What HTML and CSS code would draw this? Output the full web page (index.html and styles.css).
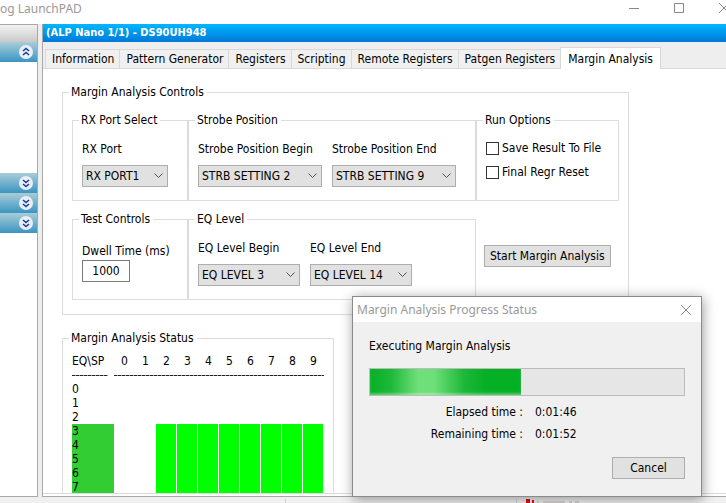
FILE: index.html
```html
<!DOCTYPE html>
<html lang="en">
<head>
    <meta charset="UTF-8" />
    <meta name="viewport" content="width=device-width, initial-scale=1" />
    <title>Analog LaunchPAD</title>
    <link rel="stylesheet" href="styles.css">
</head>
<body>
    <svg class="symbols" aria-hidden="true">
        <symbol id="chevrons" viewBox="0 0 14 14">
            <circle cx="7" cy="7" r="7" fill="#e9eefb" />
            <path d="M4 4l3 2.500L10 4M4 8l3 2.500L10 8" fill="none" stroke="#1c3d94" stroke-width="1.6" />
        </symbol>
    </svg>

    <div class="window">
        <header class="title-bar">
            <span class="title-text">og LaunchPAD</span>
            <div class="window-buttons">
                <button class="window-btn" aria-label="Minimize">
                    <svg width="12" height="12" viewBox="0 0 12 12"><path d="M1 6.500h10" /></svg>
                </button>
                <button class="window-btn" aria-label="Maximize">
                    <svg width="12" height="12" viewBox="0 0 12 12"><path d="M1.500 1.500h9v9h-9z" /></svg>
                </button>
                <button class="window-btn" aria-label="Close">
                    <svg width="12" height="12" viewBox="0 0 12 12"><path d="M1 1l10 10M11 1L1 11" /></svg>
                </button>
            </div>
        </header>

        <div class="workspace">
            <aside class="sidebar">
                <div class="sidebar-head"></div>
                <button class="sidebar-band open" aria-label="Collapse section"><svg class="chevrons up"><use href="#chevrons" /></svg></button>
                <div class="sidebar-body"></div>
                <button class="sidebar-band" aria-label="Expand section"><svg class="chevrons"><use href="#chevrons" /></svg></button>
                <button class="sidebar-band" aria-label="Expand section"><svg class="chevrons"><use href="#chevrons" /></svg></button>
                <button class="sidebar-band" aria-label="Expand section"><svg class="chevrons"><use href="#chevrons" /></svg></button>
            </aside>

            <main class="panel">
                <h1 class="panel-title">(ALP Nano 1/1) - DS90UH948</h1>
                <nav class="tabs" role="tablist">
                    <button class="tab" role="tab">Information</button>
                    <button class="tab" role="tab">Pattern Generator</button>
                    <button class="tab" role="tab">Registers</button>
                    <button class="tab" role="tab">Scripting</button>
                    <button class="tab" role="tab">Remote Registers</button>
                    <button class="tab" role="tab">Patgen Registers</button>
                    <button class="tab active" role="tab" aria-selected="true">Margin Analysis</button>
                </nav>

                <div class="page">
                    <fieldset class="group controls">
                        <legend>Margin Analysis Controls</legend>
                        <div class="control-grid">
                            <fieldset class="group">
                                <legend>RX Port Select</legend>
                                <div class="fields">
                                    <div class="field">
                                        <label for="rxPort">RX Port</label>
                                        <select id="rxPort" class="port"><option>RX PORT1</option></select>
                                    </div>
                                </div>
                            </fieldset>
                            <fieldset class="group">
                                <legend>Strobe Position</legend>
                                <div class="fields">
                                    <div class="field">
                                        <label for="spBegin">Strobe Position Begin</label>
                                        <select id="spBegin" class="strobe"><option>STRB SETTING 2</option></select>
                                    </div>
                                    <div class="field">
                                        <label for="spEnd">Strobe Position End</label>
                                        <select id="spEnd" class="strobe"><option>STRB SETTING 9</option></select>
                                    </div>
                                </div>
                            </fieldset>
                            <fieldset class="group">
                                <legend>Run Options</legend>
                                <div class="checks">
                                    <label class="check"><input type="checkbox">Save Result To File</label>
                                    <label class="check"><input type="checkbox">Final Regr Reset</label>
                                </div>
                            </fieldset>
                            <fieldset class="group">
                                <legend>Test Controls</legend>
                                <div class="dwell">
                                    <label for="dwell">Dwell Time (ms)</label>
                                    <input id="dwell" type="text" value="1000">
                                </div>
                            </fieldset>
                            <fieldset class="group">
                                <legend>EQ Level</legend>
                                <div class="fields">
                                    <div class="field">
                                        <label for="eqBegin">EQ Level Begin</label>
                                        <select id="eqBegin" class="level"><option>EQ LEVEL 3</option></select>
                                    </div>
                                    <div class="field">
                                        <label for="eqEnd">EQ Level End</label>
                                        <select id="eqEnd" class="level"><option>EQ LEVEL 14</option></select>
                                    </div>
                                </div>
                            </fieldset>
                            <div class="start">
                                <button class="btn">Start Margin Analysis</button>
                            </div>
                        </div>
                    </fieldset>

                    <fieldset class="group status">
                        <legend>Margin Analysis Status</legend>
                        <table class="results">
                            <thead>
                                <tr><th class="eq">EQ\SP</th><th>0</th><th>1</th><th>2</th><th>3</th><th>4</th><th>5</th><th>6</th><th>7</th><th>8</th><th>9</th></tr>
                                <tr class="rule"><td></td><td colspan="10"></td></tr>
                            </thead>
                            <tbody>
                                <tr><th class="eq">0</th><td colspan="10"></td></tr>
                                <tr><th class="eq">1</th><td colspan="10"></td></tr>
                                <tr><th class="eq">2</th><td colspan="10"></td></tr>
                                <tr class="pass"><th class="eq">3</th><td></td><td></td><td class="ok"></td><td class="ok"></td><td class="ok"></td><td class="ok"></td><td class="ok"></td><td class="ok"></td><td class="ok"></td><td class="ok"></td></tr>
                                <tr class="pass"><th class="eq">4</th><td></td><td></td><td class="ok"></td><td class="ok"></td><td class="ok"></td><td class="ok"></td><td class="ok"></td><td class="ok"></td><td class="ok"></td><td class="ok"></td></tr>
                                <tr class="pass"><th class="eq">5</th><td></td><td></td><td class="ok"></td><td class="ok"></td><td class="ok"></td><td class="ok"></td><td class="ok"></td><td class="ok"></td><td class="ok"></td><td class="ok"></td></tr>
                                <tr class="pass"><th class="eq">6</th><td></td><td></td><td class="ok"></td><td class="ok"></td><td class="ok"></td><td class="ok"></td><td class="ok"></td><td class="ok"></td><td class="ok"></td><td class="ok"></td></tr>
                                <tr class="pass"><th class="eq">7</th><td></td><td></td><td class="ok"></td><td class="ok"></td><td class="ok"></td><td class="ok"></td><td class="ok"></td><td class="ok"></td><td class="ok"></td><td class="ok"></td></tr>
                            </tbody>
                        </table>
                    </fieldset>
                </div>
            </main>
        </div>

        <footer class="status-bar">
            <div class="status-cell"></div>
            <div class="status-cell"></div>
            <div class="status-cell">
                <svg width="60" height="4" viewBox="0 0 60 4">
                    <path d="M1 0h4v4h-4zM7 1h2v3h-2z" fill="#e01010" />
                    <path d="M12 3h2M18 3h22M44 3h3M50 3h4" stroke="#c4b4b4" />
                </svg>
            </div>
        </footer>
    </div>

    <div class="dialog" role="dialog" aria-labelledby="dialogTitle">
        <div class="dialog-title">
            <span id="dialogTitle">Margin Analysis Progress Status</span>
            <button class="window-btn" aria-label="Close">
                <svg width="12" height="12" viewBox="0 0 12 12"><path d="M1 1l10 10M11 1L1 11" /></svg>
            </button>
        </div>
        <div class="dialog-body">
            <p>Executing Margin Analysis</p>
            <div class="progress" role="progressbar" aria-valuenow="48" aria-valuemin="0" aria-valuemax="100">
                <div class="progress-fill" style="width: 48%"></div>
            </div>
            <dl class="times">
                <dt>Elapsed time :</dt><dd>0:01:46</dd>
                <dt>Remaining time :</dt><dd>0:01:52</dd>
            </dl>
            <div class="dialog-actions">
                <button class="btn cancel">Cancel</button>
            </div>
        </div>
    </div>
</body>
</html>
```
FILE: styles.css
```css
* {
    margin: 0;
    padding: 0;
    box-sizing: border-box;
}
body {
    font-family: "DejaVu Sans Condensed", "DejaVu Sans", Tahoma, sans-serif;
    font-size: 12px;
    line-height: 16px;
    color: #000;
    background: #f0f0f0;
    overflow: hidden;
}
button, input, select {
    font: inherit;
    color: inherit;
}
.symbols {
    display: none;
}
.window {
    height: 100vh;
    display: flex;
    flex-direction: column;
}

/* title bar */
.title-bar {
    display: flex;
    justify-content: space-between;
    height: 24px;
    background: #fff;
    overflow: hidden;
}
.title-text, .dialog-title {
    font-family: "Noto Sans", "Segoe UI", sans-serif;
    line-height: 18px;
    color: #999;
}
.window-buttons {
    display: flex;
    gap: 33px;
    margin-right: -4px;
}
.window-btn {
    display: flex;
    width: 12px;
    height: 16px;
    align-items: center;
    border: none;
    background: none;
}
.window-btn path {
    fill: none;
    stroke: #888;
}

/* left sidebar */
.workspace {
    flex: 1;
    min-height: 0;
    display: flex;
    gap: 4px;
    background: #eee;
}
.sidebar {
    width: 38px;
    background: #fff;
    border: 1px solid #a8a8a8;
    border-left: none;
}
.sidebar-head {
    height: 17px;
    background: linear-gradient(#f2f2f2, #c9c9c9);
}
.sidebar-band {
    display: flex;
    align-items: center;
    justify-content: flex-end;
    width: 100%;
    height: 20px;
    padding-right: 4px;
    border: none;
    background: linear-gradient(#a9cdd6, #3b95c2);
}
.sidebar-body {
    height: 111px;
}
.chevrons {
    width: 14px;
    height: 14px;
}
.chevrons.up {
    transform: rotate(180deg);
}

/* main panel */
.panel {
    flex: 1;
    min-width: 0;
    display: flex;
    flex-direction: column;
    background: #fff;
    border-left: 1px solid #a8a8a8;
    border-bottom: 1px solid #a8a8a8;
}
.panel-title {
    height: 18px;
    padding-left: 3px;
    font-size: 11px;
    line-height: 18px;
    color: #fff;
    background: linear-gradient(#00b7ff, #0078d7);
}
.tabs {
    display: flex;
    align-items: flex-end;
    height: 27px;
    padding-left: 2px;
    background: #eee;
    box-shadow: inset 0 -1px #d9d9d9;
}
.tab {
    height: 20px;
    padding: 0 5px 0 6px;
    white-space: nowrap;
    border: 1px solid #d9d9d9;
    border-right: none;
    background: #f0f0f0;
}
.tab.active {
    height: 22px;
    padding: 0 7px;
    border-right: 1px solid #d9d9d9;
    border-bottom: none;
    background: #fff;
}
.page {
    flex: 1;
    min-height: 0;
    margin-bottom: 2px;
    padding: 15px 97px 0 19px;
    border-bottom: 1px solid #dcdcdc;
    overflow: hidden;
}

/* group boxes */
.group {
    min-width: 0;
    padding: 0 6px;
    border: 1px solid #dcdcdc;
}
.group legend {
    padding: 0 3px 0 2px;
    white-space: nowrap;
}
.group.controls {
    padding: 12px 9px 14px;
}
.control-grid {
    display: grid;
    grid-template-columns: 116fr 288fr 143fr;
    row-gap: 10px;
}
.controls > legend {
    margin-left: -3px;
}
.fields {
    display: flex;
    gap: 10px;
    padding: 13px 3px;
}
.field {
    display: flex;
    flex-direction: column;
    gap: 8px;
}
label {
    white-space: nowrap;
}
select {
    appearance: none;
    height: 22px;
    padding: 0 3px;
    border: 1px solid #adadad;
    border-radius: 0;
    background: #e1e1e1 url("data:image/svg+xml,%3Csvg xmlns='http://www.w3.org/2000/svg' width='9' height='6'%3E%3Cpath d='M.5 .5l4 4 4-4' fill='none' stroke='%23555'/%3E%3C/svg%3E") no-repeat right 4px center;
}
.port {
    width: 86px;
}
.strobe {
    width: 124px;
}
.level {
    width: 102px;
}
.checks {
    display: flex;
    flex-direction: column;
    gap: 8px;
    padding: 12px 3px;
}
.check {
    display: flex;
    align-items: center;
    gap: 3px;
}
.check input {
    appearance: none;
    width: 13px;
    height: 13px;
    border: 1px solid #333;
    background: #fff;
}
.dwell {
    display: flex;
    flex-direction: column;
    align-items: flex-start;
    gap: 1px;
    padding: 16px 3px;
}
.dwell input {
    width: 48px;
    height: 22px;
    border: 1px solid #7a7a7a;
    text-align: center;
}
.btn {
    height: 22px;
    padding: 0 5px;
    white-space: nowrap;
    border: 1px solid #adadad;
    background: #e1e1e1;
}
.start {
    display: flex;
    align-items: center;
    padding-left: 8px;
}

/* results table */
.status {
    width: 272px;
    margin-top: 15px;
    padding: 8px 9px 20px;
}
.status > legend {
    margin-left: -3px;
}
.results {
    width: 252px;
    table-layout: fixed;
    border-collapse: collapse;
    line-height: 14px;
}
.results tr {
    height: 14px;
}
.results th {
    width: 21px;
    font-weight: normal;
}
.results .eq {
    width: 42px;
    text-align: left;
}
.rule td {
    background: repeating-linear-gradient(90deg, #222 0 3px, #999 3px 4px) no-repeat 0 7px / 100% 1px;
}
.rule td:first-child {
    background-size: 36px 1px;
}
.pass .eq {
    background: #32cd32;
}
.ok {
    background: linear-gradient(#0f0, #0f0) no-repeat 0 0 / 20px 100%;
}

.status-bar {
    display: grid;
    grid-template-columns: 285fr 231fr 210fr;
    height: 6px;
    padding-top: 2px;
}
.status-cell {
    border-left: 1px solid #d0d0d0;
}
.status-cell:first-child {
    border-left: none;
}
.status-cell:last-child {
    padding-left: 8px;
}
.status-cell svg {
    display: block;
}

/* progress dialog */
.dialog {
    position: absolute;
    top: 296px;
    left: 352px;
    width: 350px;
    border: 1px solid #8a8a8a;
    background: #f0f0f0;
    box-shadow: 1px 2px 12px rgba(0, 0, 0, 0.4);
}
.dialog-title {
    display: flex;
    justify-content: space-between;
    align-items: center;
    height: 25px;
    padding: 0 9px 0 4px;
    background: #fff;
}
.dialog-body {
    padding: 16px 16px 17px;
}
.progress {
    height: 28px;
    margin: 14px 0 8px;
    border: 1px solid #bcbcbc;
    background: #e6e6e6;
}
.progress-fill {
    height: 100%;
    background: linear-gradient(90deg, #06b025 0%, #1eb83a 14%, #6fe079 32%, #6fe079 42%, #1eb83a 62%, #06b025 76%);
    box-shadow: inset 0 -2px 2px rgba(255, 255, 255, 0.3);
}
.times {
    display: grid;
    grid-template-columns: 154px auto;
    gap: 6px 12px;
}
.times dt {
    text-align: right;
}
.dialog-actions {
    display: flex;
    justify-content: flex-end;
    margin-top: 15px;
}
.cancel {
    width: 73px;
}
```
